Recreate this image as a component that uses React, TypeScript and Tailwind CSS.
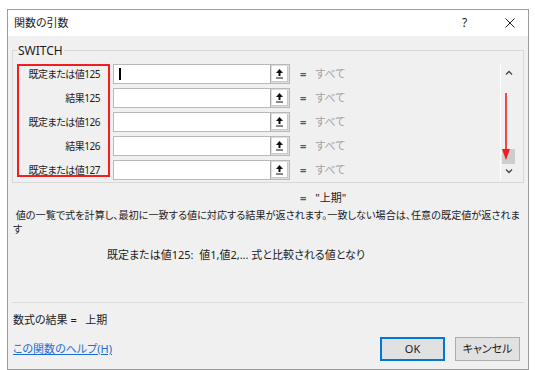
import React from 'react';

const rows = [
  { label: '既定または値125', cursor: true },
  { label: '結果125' },
  { label: '既定または値126' },
  { label: '結果126' },
  { label: '既定または値127' },
];

const CollapseIcon = () => (
  <svg width="9" height="11" viewBox="0 0 9 11">
    <path d="M4.5 1 L8 5 H1 Z" fill="#111" />
    <rect x="3.5" y="4.5" width="2" height="3.5" fill="#111" />
    <rect x="1" y="9.5" width="7" height="1" fill="#111" />
  </svg>
);

const ArgRow = ({ label, cursor }: { label: string; cursor?: boolean }) => (
  <div className="flex items-center h-[20px]">
    <div className="w-[92px] text-right pr-[5px] whitespace-nowrap text-[10px] tracking-[-0.5px]">{label}</div>
    <div className="ml-[8px] w-[177px] h-[20px] flex bg-white border border-[#b9b9b9]">
      <div className="flex-1 flex items-center pl-[5px]">
        {cursor && <div className="w-[2px] h-[12px] bg-black" />}
      </div>
      <div className="w-[19px] h-full border-l border-[#a8a8a8] bg-[#dedede] p-[1px]">
        <div className="w-full h-full bg-white flex items-center justify-center border-r border-b border-[#c8c8c8]">
          <CollapseIcon />
        </div>
      </div>
    </div>
    <div className="ml-[10px] font-bold text-[#555]">=</div>
    <div className="ml-[9px] text-[#a3a3a3]">すべて</div>
  </div>
);

export default function App() {
  return (
    <div className="relative w-[535px] h-[370px] bg-white pl-[7px] pt-[9px] font-['Noto_Sans','Noto_Sans_CJK_JP',sans-serif] text-[11px] leading-[14px] text-[#1b1b1b] [font-feature-settings:'palt']">
      <div className="w-[522px] h-[361px] border border-[#9c9c9c] bg-[#f0f0f0] flex flex-col">
        {/* Title bar */}
        <div className="h-[26px] bg-white flex items-center pl-[6px] text-[11px]">
          <span className="flex-1">関数の引数</span>
          <span className="w-[10px] text-[12px]">?</span>
          <svg className="ml-[33px] mr-[13px]" width="10" height="10" viewBox="0 0 10 10">
            <path d="M0.5 0.5 L9.5 9.5 M9.5 0.5 L0.5 9.5" stroke="#222" strokeWidth="1" />
          </svg>
        </div>

        {/* Argument group */}
        <fieldset className="mx-[4px] mt-[7px] h-[140px] border border-[#d8d8d8] flex">
          <legend className="ml-[4px] px-[1px] text-[12px] leading-[15px]">SWITCH</legend>
          <div className="flex-1 flex flex-col gap-[4px] pt-[6px]">
            {rows.map((r) => (
              <ArgRow key={r.label} label={r.label} cursor={r.cursor} />
            ))}
          </div>
          <div className="mt-[6px] w-[16px] h-[116px] mr-[7px] border-l border-white flex flex-col items-center justify-between py-[6px]">
            <svg width="8" height="5" viewBox="0 0 8 5">
              <path d="M1 4.5 L4 1.5 L7 4.5" stroke="#444" strokeWidth="1.3" fill="none" />
            </svg>
            <div className="flex flex-col items-center gap-[5px]">
              <div className="w-[13px] h-[15px] bg-[#cdcdcd]" />
              <svg width="8" height="5" viewBox="0 0 8 5">
                <path d="M1 0.5 L4 3.5 L7 0.5" stroke="#444" strokeWidth="1.3" fill="none" />
              </svg>
            </div>
          </div>
        </fieldset>

        {/* Result value */}
        <div className="mt-[8px] pl-[292px] whitespace-nowrap">
          <span className="font-bold text-[#555]">=</span>
          <span className="ml-[9px]">"上期"</span>
        </div>

        {/* Description */}
        <p className="mt-[3px] pl-[5px] pr-[1px] leading-[14px] text-[10.15px]">
          &nbsp;値の一覧で式を計算し、最初に一致する値に対応する結果が返されます。一致しない場合は、任意の既定値が返されます
        </p>
        <div className="mt-[12px] pl-[99px] whitespace-pre">既定または値125:  値1,値2,... 式と比較される値となり</div>

        <div className="mt-auto mx-[4px] border-t border-[#dcdcdc]" />

        <div className="pl-[5px] pt-[10px] whitespace-pre">数式の結果 =   上期</div>

        <div className="flex items-center pl-[5px] pr-[8px] mt-[10px] mb-[8px]">
          <a className="flex-1 text-[#1a6fd6] underline">この関数のヘルプ(H)</a>
          <button className="w-[65px] h-[24px] bg-[#e1e1e1] border-2 border-[#0078d7] text-[11px]">OK</button>
          <button className="ml-[10px] w-[65px] h-[24px] bg-[#e1e1e1] border border-[#adadad] text-[11px]">キャンセル</button>
        </div>
      </div>

      {/* Annotation: red frame around labels */}
      <div className="absolute left-[17px] top-[64px] w-[93px] h-[113px] border-2 border-[#f01e1e]" />

      {/* Annotation: red arrow along scrollbar */}
      <svg className="absolute left-[501px] top-[93px]" width="10" height="68" viewBox="0 0 10 68">
        <line x1="5" y1="0" x2="5" y2="58" stroke="#f01e1e" strokeWidth="1.6" />
        <path d="M1 56 L5 67 L9 56 Z" fill="#f01e1e" />
      </svg>
    </div>
  );
}
